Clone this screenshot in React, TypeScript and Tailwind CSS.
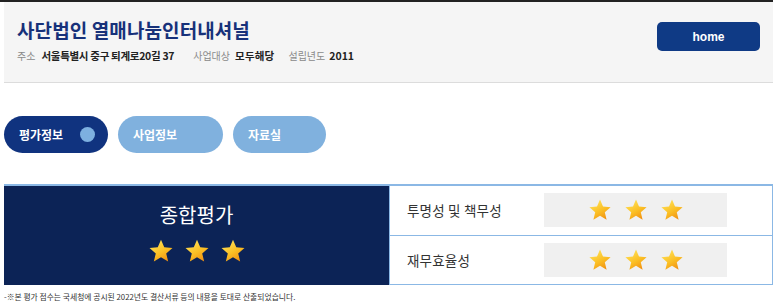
import { useId } from "react";

function Star({ size }: { size: number }) {
  const id = useId();
  return (
    <svg width={size} height={size} viewBox="0 0 24 24" aria-hidden>
      <defs>
        <linearGradient id={id} x1="0.2" y1="0" x2="0.8" y2="1">
          <stop offset="0" stopColor="#ffe45c" />
          <stop offset="0.55" stopColor="#fbbf24" />
          <stop offset="1" stopColor="#f08c10" />
        </linearGradient>
      </defs>
      <polygon points="12,1.5 15,8.6 22.6,9.2 16.8,14.2 18.6,21.8 12,17.7 5.4,21.8 7.2,14.2 1.4,9.2 9,8.6" fill={`url(#${id})`} />
    </svg>
  );
}

function Stars({ size, gap }: { size: number; gap: string }) {
  return (
    <div className={`flex items-center ${gap}`}>
      <Star size={size} />
      <Star size={size} />
      <Star size={size} />
    </div>
  );
}

const tabs = [
  { label: "평가정보", width: "w-[104px]", active: true },
  { label: "사업정보", width: "w-[105px]", active: false },
  { label: "자료실", width: "w-[93px]", active: false },
];

const rows = ["투명성 및 책무성", "재무효율성"];

export default function App() {
  return (
    <div className="h-[307px] w-[773px] overflow-hidden bg-white font-['Noto_Sans_CJK_KR','Noto_Sans',sans-serif]">
      <div className="h-[2px] bg-[#222]" />
      <header className="ml-[4px] flex h-[81px] items-start justify-between border-b border-[#dcdcdc] bg-[#f5f5f5] pl-[13px] pr-[13px]">
        <div className="pt-[14px]">
          <h1 className="text-[19px] font-bold leading-[27px] tracking-[0.1px] text-[#17317a]">사단법인 열매나눔인터내셔널</h1>
          <div className="mt-[6px] flex items-center text-[10px] leading-[14px]">
            <span className="text-[#8a8a8a]">주소</span>
            <span className="ml-[6px] text-[10.5px] font-bold tracking-[-0.3px] text-[#222]">서울특별시 중구 퇴계로20길 37</span>
            <span className="ml-[19px] text-[#8a8a8a]">사업대상</span>
            <span className="ml-[5px] text-[10.5px] font-bold tracking-[0.2px] text-[#222]">모두해당</span>
            <span className="ml-[14px] text-[#8a8a8a]">설립년도</span>
            <span className="ml-[4px] text-[10.5px] font-bold text-[#222]">2011</span>
          </div>
        </div>
        <button className="mt-[20px] h-[29px] w-[103px] rounded-[5px] bg-[#0f3a85] font-['Liberation_Sans',sans-serif] text-[12px] font-bold text-white">home</button>
      </header>

      <nav className="ml-[4px] mt-[33px] flex gap-[10px]">
        {tabs.map((tab) => (
          <div
            key={tab.label}
            className={`flex h-[37px] items-center justify-between rounded-full pl-[15px] pr-[13px] ${tab.width} ${tab.active ? "bg-[#10337f]" : "bg-[#80b1de]"}`}
          >
            <span className="text-[12px] font-bold text-white">{tab.label}</span>
            {tab.active ? <span className="h-[15px] w-[15px] rounded-full bg-[#7db0e0]" /> : null}
          </div>
        ))}
      </nav>

      <section className="ml-[4px] mt-[31px] flex h-[101px] border-t-2 border-[#8bb8e5]">
        <div className="flex w-[385px] flex-col items-center bg-[#0c2356] pt-[14px]">
          <div className="text-[20px] leading-[30px] text-white">종합평가</div>
          <div className="mt-[8px]">
            <Stars size={26} gap="gap-[10px]" />
          </div>
        </div>
        <div className="flex flex-1 flex-col border-b border-l border-r border-[#8bb8e5]">
          {rows.map((row, index) => (
            <div key={row} className={`flex flex-1 items-center pl-[17px] ${index === 0 ? "border-b border-[#8bb8e5]" : ""}`}>
              <span className="w-[137px] text-[13.5px] tracking-[0.2px] text-[#333]">{row}</span>
              <div className="flex h-[34px] w-[183px] items-center justify-center bg-[#f0f0f0]">
                <Stars size={24} gap="gap-[12px]" />
              </div>
            </div>
          ))}
        </div>
      </section>

      <p className="ml-[4px] mt-[7px] text-[7.8px] leading-[10px] text-[#333]">-※본 평가 점수는 국세청에 공시된 2022년도 결산서류 등의 내용을 토대로 산출되었습니다.</p>
    </div>
  );
}
